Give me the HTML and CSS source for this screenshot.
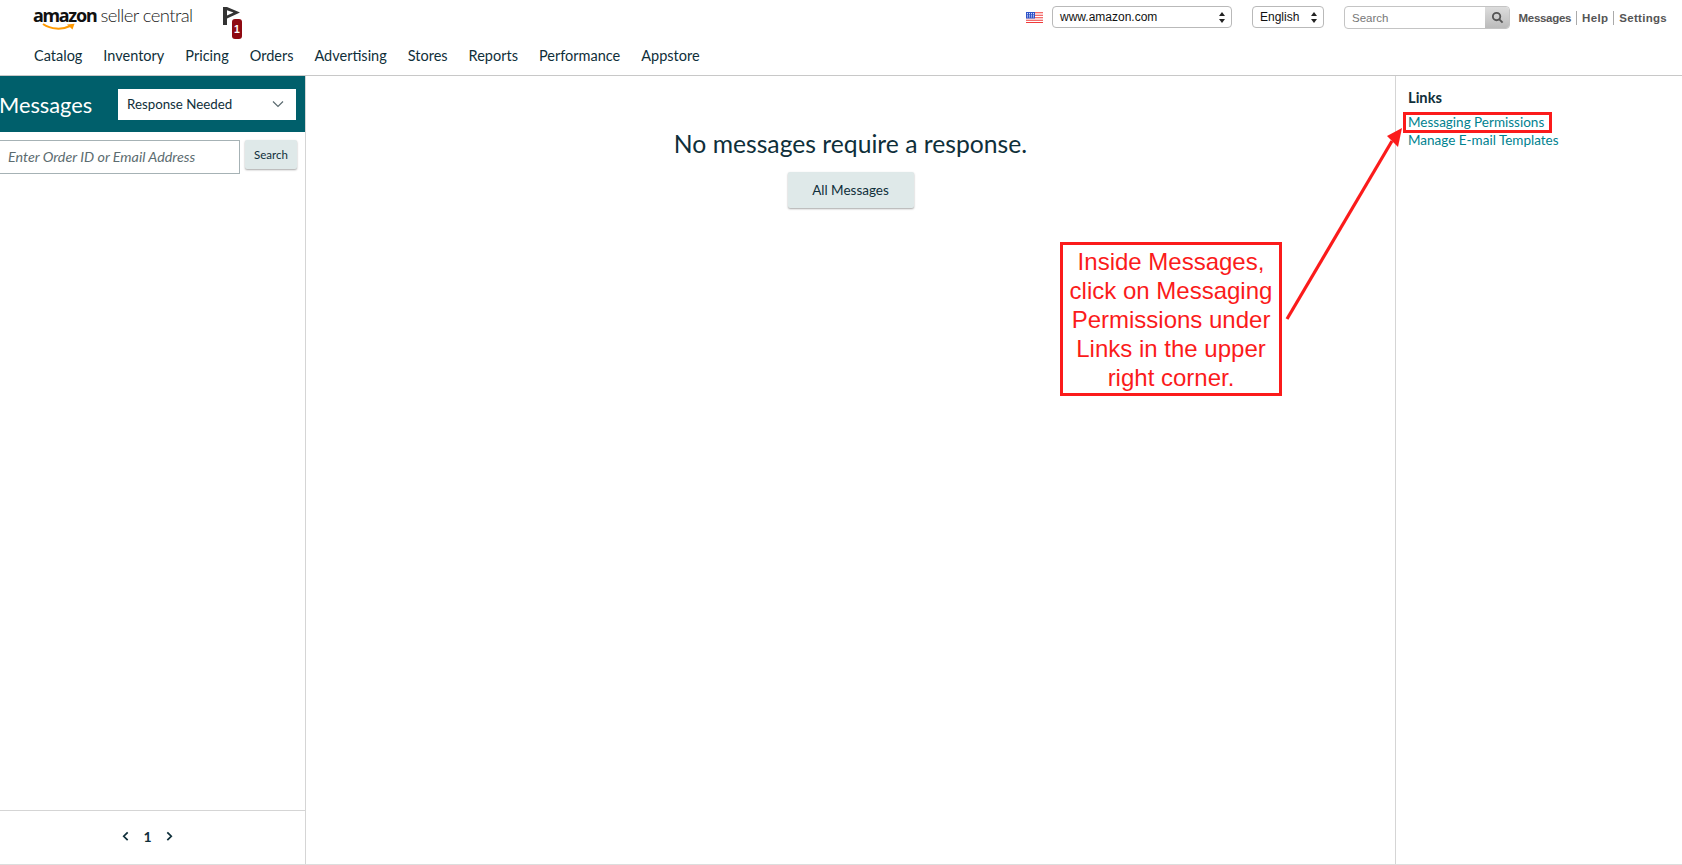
FILE: index.html
```html
<!DOCTYPE html>
<html lang="en">
<head>
<meta charset="utf-8">
<title>Messages - Amazon Seller Central</title>
<link rel="stylesheet" href="styles.css">
</head>
<body>
<div class="page">
  <header class="header">
    <div class="top-row">
      <a class="logo">
        <span class="logo-amazon">amazon</span><span class="logo-seller">seller central</span>
        <svg class="logo-smile" viewBox="0 0 34 8" width="34" height="8"><path d="M1 1C9 6.5 20 7 28 3" fill="none" stroke="#f90" stroke-width="2"/><path d="M25 1.5L32.5 .8L30.5 6.5Z" fill="#f90"/></svg>
      </a>
      <div class="flag-alert">
        <svg viewBox="0 0 17 18" width="17" height="18"><path d="M0 0H4L17 5.5L4 11.5V18H0Z M4 3.2V8.4L10.5 5.6Z" fill="#333" fill-rule="evenodd"/></svg>
        <span class="flag-badge">1</span>
      </div>
      <div class="top-tools">
        <svg class="us-flag" viewBox="0 0 17 11" width="17" height="11">
          <rect width="17" height="11" fill="#fff"/>
          <path d="M0 .75h17M0 3.25h17M0 5.75h17M0 8.25h17M0 10.5h17" stroke="#ef3b3b" stroke-width="1.2"/>
          <rect width="9" height="6.5" fill="#2f54c8"/>
          <path d="M1 1.5h7M1 3.2h7M1 4.9h7" stroke="#e6ecff" stroke-width=".9" stroke-dasharray="1 1"/>
        </svg>
        <div class="fake-select market">www.amazon.com<span class="updown"></span></div>
        <div class="fake-select lang">English<span class="updown"></span></div>
        <div class="top-search">
          <span class="top-search-input">Search</span>
          <span class="top-search-btn"><svg viewBox="0 0 14 14" width="13" height="13"><circle cx="6" cy="6" r="4" fill="none" stroke="#555" stroke-width="2"/><path d="M9 9L12.5 12.5" stroke="#555" stroke-width="2"/></svg></span>
        </div>
        <nav class="util-links"><a class="util-tight">Messages</a><a class="util-wide">Help</a><a class="util-wide">Settings</a></nav>
      </div>
    </div>
    <nav class="main-nav">
      <a>Catalog</a><a>Inventory</a><a>Pricing</a><a>Orders</a><a>Advertising</a><a>Stores</a><a>Reports</a><a>Performance</a><a>Appstore</a>
    </nav>
  </header>
  <main class="main">
    <aside class="left">
      <div class="left-head">
        <h1 class="left-title">Messages</h1>
        <div class="filter">Response Needed
          <svg viewBox="0 0 12 8" width="12" height="8"><path d="M1 1.5L6 6.5L11 1.5" fill="none" stroke="#5b6b70" stroke-width="1.2"/></svg>
        </div>
      </div>
      <div class="left-search">
        <div class="order-input">Enter Order ID or Email Address</div>
        <button class="btn btn-small">Search</button>
      </div>
      <div class="pager">
        <svg viewBox="0 0 8 12" width="7" height="10.5"><path d="M6.5 1.5L2 6L6.5 10.5" fill="none" stroke="#0f2f3a" stroke-width="2"/></svg>
        <span class="pager-num">1</span>
        <svg viewBox="0 0 8 12" width="7" height="10.5"><path d="M1.5 1.5L6 6L1.5 10.5" fill="none" stroke="#0f2f3a" stroke-width="2"/></svg>
      </div>
    </aside>
    <section class="center">
      <h2 class="empty-title">No messages require a response.</h2>
      <button class="btn btn-big">All Messages</button>
    </section>
    <aside class="right">
      <h3 class="links-title">Links</h3>
      <a class="side-link">Messaging Permissions</a>
      <a class="side-link">Manage E-mail Templates</a>
    </aside>
  </main>
  <div class="note">Inside Messages, click on Messaging Permissions under Links in the upper right corner.</div>
  <div class="note-ring"></div>
  <svg class="note-arrow" viewBox="0 0 1682 865" width="1682" height="865">
    <path d="M1287 319L1392 141" fill="none" stroke="#fb1b1b" stroke-width="3.2"/>
    <path d="M1402 128L1387 136L1398 147Z" fill="#fb1b1b"/>
  </svg>
</div>
</body>
</html>
```
FILE: styles.css
```css
* { box-sizing: border-box; }
html, body { margin: 0; padding: 0; background: #fff; }
body { font-family: "Lato", "Noto Sans", sans-serif; color: #0f2f3a; overflow: hidden; }
.page { position: relative; width: 1682px; height: 865px; display: flex; flex-direction: column; overflow: hidden; }

.header { height: 76px; border-bottom: 1px solid #c8c8c8; flex: none; }
.top-row { height: 46px; display: flex; align-items: flex-start; padding-left: 33px; }
.logo { position: relative; display: flex; align-items: baseline; width: 160px; margin-top: 3px; color: #111; white-space: nowrap; }
.logo-amazon { font: 700 18px "Noto Sans", sans-serif; letter-spacing: -1.25px; }
.logo-seller { font: 300 18.5px "Lato", sans-serif; margin-left: 4px; letter-spacing: -.6px; color: #222; }
.logo-smile { position: absolute; left: 9px; top: 20px; }
.flag-alert { position: relative; width: 20px; height: 34px; margin-left: 30px; margin-top: 7px; }
.flag-badge { position: absolute; left: 9px; top: 12px; width: 10px; height: 20px; border-radius: 3px; background: #8f0a12; color: #fff; font: 700 10.5px/21px "Liberation Sans", sans-serif; text-align: center; }
.top-tools { margin-left: auto; display: flex; align-items: flex-start; padding-top: 6px; padding-right: 15px; font-family: "Liberation Sans", sans-serif; }
.us-flag { margin-top: 6px; margin-right: 9px; }
.fake-select { position: relative; height: 22px; background: #fff; border: 1px solid #b9b9b9; border-radius: 4px; font-size: 12px; line-height: 20px; padding-left: 7px; color: #111; }
.market { width: 180px; margin-right: 20px; }
.lang { width: 72px; margin-right: 20px; }
.updown { position: absolute; right: 6px; top: 5px; width: 0; height: 11px; border-left: 3px solid transparent; border-right: 3px solid transparent; background: none; }
.updown::before, .updown::after { content: ""; position: absolute; left: -3px; border-left: 3px solid transparent; border-right: 3px solid transparent; }
.updown::before { top: 0; border-bottom: 4px solid #222; }
.updown::after { bottom: 0; border-top: 4px solid #222; }
.top-search { display: flex; width: 166px; height: 23px; border: 1px solid #c4c4c4; border-radius: 4px; overflow: hidden; background: #fff; margin-right: 8px; }
.top-search-input { flex: 1; font-size: 11.5px; line-height: 22px; padding-left: 7px; color: #777; }
.top-search-btn { width: 24px; display: flex; align-items: center; justify-content: center; background: linear-gradient(#ddd, #bbb); }
.util-links { display: flex; width: 149px; justify-content: flex-end; font-size: 11.5px; font-weight: 700; color: #555; padding-top: 5px; line-height: 14px; }
.util-links a + a { margin-left: 5px; padding-left: 5px; border-left: 1px solid #aaa; }
.util-tight { letter-spacing: -.3px; }
.util-wide { letter-spacing: .3px; }

.main-nav { display: flex; gap: 21px; padding-left: 34px; font-size: 14.5px; line-height: 20px; color: #0f2f3a; }

.main { flex: 1; display: flex; height: 789px; border-bottom: 1px solid #ddd; min-height: 0; }
.left { width: 306px; flex: none; border-right: 1px solid #d5d5d5; display: flex; flex-direction: column; }
.left-head { height: 56px; background: #005f6b; display: flex; align-items: center; flex: none; color: #fff; }
.left-title { margin: 0 0 0 -1px; width: 119px; font-size: 21.8px; font-weight: 400; }
.filter { width: 178px; height: 31px; background: #fff; color: #0f2f3a; font-size: 13.3px; line-height: 31px; padding: 0 12px 0 9px; display: flex; justify-content: space-between; align-items: center; }
.left-search { display: flex; gap: 5px; padding-top: 8px; }
.order-input { width: 240px; height: 34px; border: 1px solid #a6b2b5; border-left: 0; font-size: 14.3px; font-style: italic; line-height: 32px; padding-left: 8px; color: #5c6c70; white-space: nowrap; }
.btn { background: #dfe9e9; border: 0; border-radius: 2px; box-shadow: 0 1px 2px rgba(0,0,0,.35); color: #0f2f3a; font-family: "Lato", sans-serif; padding: 0; }
.btn-small { width: 52px; height: 29px; font-size: 11.5px; }
.pager { margin-top: auto; height: 54px; flex: none; border-top: 1px solid #d5d5d5; display: flex; align-items: center; justify-content: center; gap: 14px; padding: 0 10px 3px 0; }
.pager-num { font-weight: 700; font-size: 14px; }
.center { flex: 1; display: flex; flex-direction: column; align-items: center; padding-top: 53px; }
.empty-title { margin: 0; font-size: 24.7px; font-weight: 400; line-height: 30px; }
.btn-big { width: 126px; height: 36px; margin-top: 13px; font-size: 13.5px; }
.right { width: 287px; flex: none; border-left: 1px solid #d5d5d5; padding: 11px 0 0 12px; display: flex; flex-direction: column; }
.links-title { margin: 0 0 6px; font-size: 14.7px; font-weight: 700; line-height: 20px; }
.side-link { font-size: 13.5px; line-height: 18px; color: #00828f; }

.note { position: absolute; left: 1060px; top: 242px; width: 222px; height: 154px; border: 3px solid #fb1b1b; color: #fb1b1b; font: 24px/29px "Liberation Sans", sans-serif; text-align: center; padding: 2px 3px 0; }
.note-ring { position: absolute; left: 1403px; top: 112px; width: 149px; height: 21px; border: 3px solid #fb1b1b; }
.note-arrow { position: absolute; left: 0; top: 0; pointer-events: none; }
```
